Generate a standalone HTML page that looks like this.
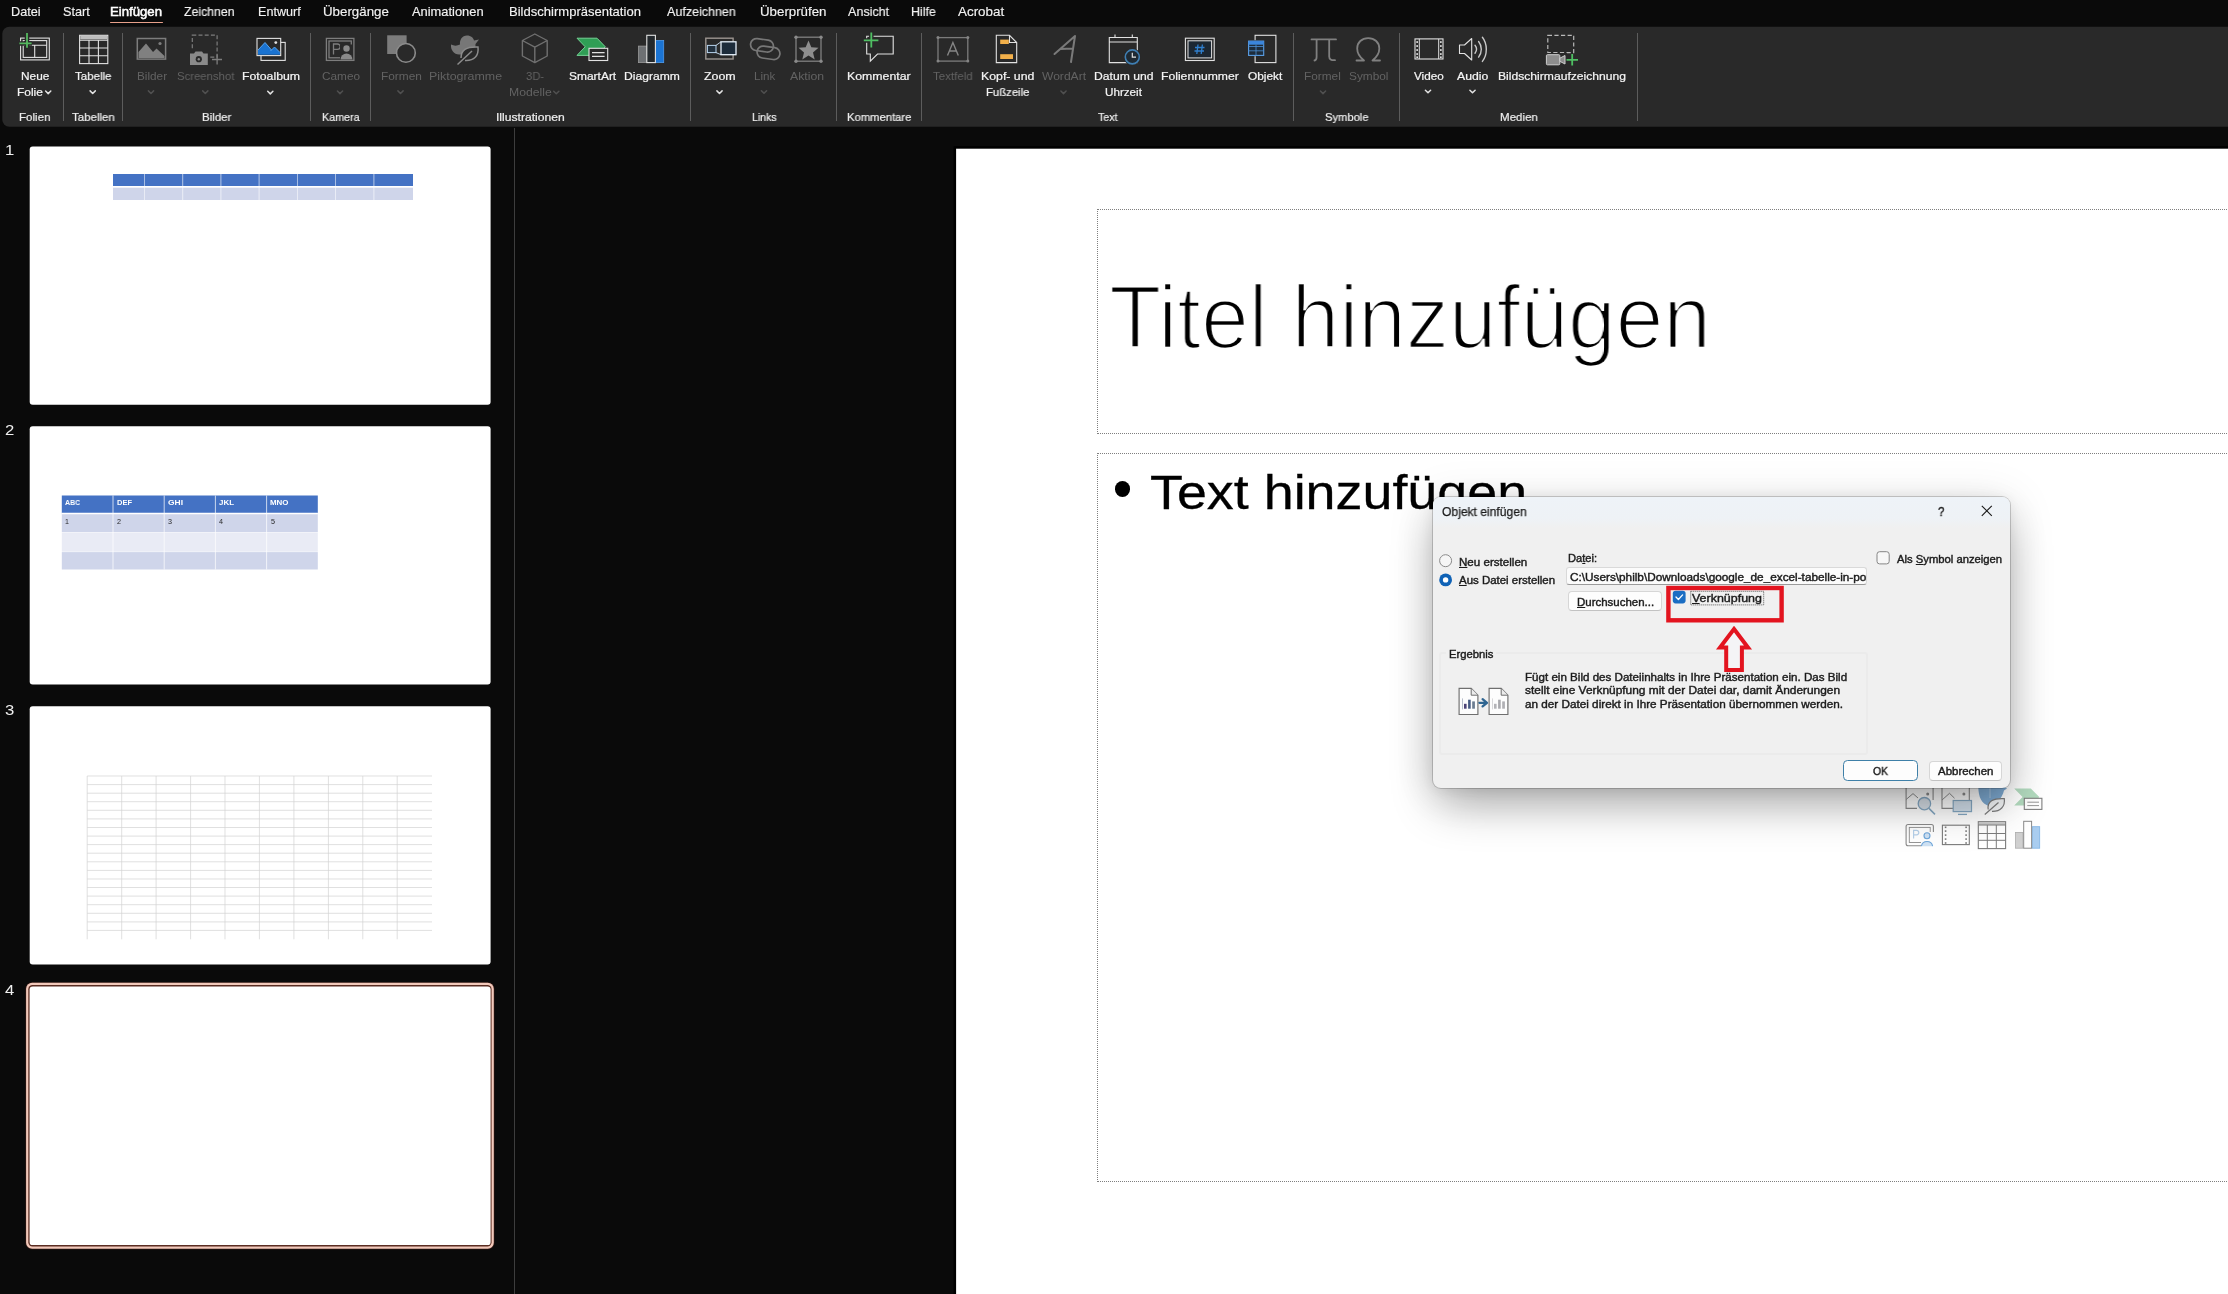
<!DOCTYPE html>
<html lang="de"><head><meta charset="utf-8"><title>PowerPoint – Objekt einfügen</title>
<style>

html,body{margin:0;padding:0;background:#0a0a0a;}
body{width:2228px;height:1294px;overflow:hidden;font-family:"Liberation Sans",sans-serif;}
#app{position:relative;width:2228px;height:1294px;overflow:hidden;background:#0a0a0a;}
.a{position:absolute;}
.t{position:absolute;white-space:pre;transform-origin:0 0;z-index:3;will-change:transform;}
.t u{text-decoration:underline;text-underline-offset:1px;text-decoration-thickness:1px;}
.sep{width:1px;top:33px;height:88px;background:#5c5c5c;}
.ph{border:1px dotted #7f7f7f;left:1096.5px;width:1200px;z-index:2;}
#dlg{left:1433px;top:497px;width:577px;height:291px;background:#f0f0f0;border-radius:8px;z-index:4;
 box-shadow:0 0 0 1px rgba(0,0,0,.18),0 2px 16px rgba(0,0,0,.08),0 6px 44px 8px rgba(0,0,0,.075),0 20px 48px -6px rgba(0,0,0,.33);overflow:hidden;}
#dlgtitle{left:0;top:0;width:577px;height:31px;background:linear-gradient(#eef3f8 0,#eef2f6 70%,#f0f0f0 100%);}
.btn{background:#fdfdfd;border:1px solid #d6d6d6;border-bottom-color:#c2c2c2;border-radius:4px;box-sizing:border-box;}
svg{position:absolute;left:0;top:0;overflow:visible;}

</style></head>
<body>
<div id="app">

<svg width="2228" height="1294"><rect x="2.3" y="26.7" width="2240" height="100" rx="7" fill="#292929"/></svg>
<div class="a" style="left:110px;top:21.6px;width:53px;height:1.6px;background:#e8a08a;border-radius:1px;"></div>
<div class="a sep" style="left:63.0px"></div><div class="a sep" style="left:121.7px"></div><div class="a sep" style="left:310.1px"></div><div class="a sep" style="left:369.5px"></div><div class="a sep" style="left:690.0px"></div><div class="a sep" style="left:836.3px"></div><div class="a sep" style="left:920.9px"></div><div class="a sep" style="left:1292.8px"></div><div class="a sep" style="left:1398.7px"></div><div class="a sep" style="left:1636.6px"></div>
<div class="a" style="left:514px;top:128px;width:1px;height:1170px;background:#3d3d3d;"></div>
<svg width="2228" height="1294"><rect x="29.7" y="146.4" width="460.9" height="258.3" rx="3" fill="#fff"/><rect x="113" y="174.0" width="300" height="12" fill="#4472c4"/><rect x="113" y="187.7" width="300" height="12.3" fill="#cfd5ea"/><path d="M144.4 174.0V200.0" stroke="#fff" stroke-width="0.8" opacity=".75"/><path d="M182.7 174.0V200.0" stroke="#fff" stroke-width="0.8" opacity=".75"/><path d="M220.9 174.0V200.0" stroke="#fff" stroke-width="0.8" opacity=".75"/><path d="M259.1 174.0V200.0" stroke="#fff" stroke-width="0.8" opacity=".75"/><path d="M297.4 174.0V200.0" stroke="#fff" stroke-width="0.8" opacity=".75"/><path d="M335.6 174.0V200.0" stroke="#fff" stroke-width="0.8" opacity=".75"/><path d="M373.9 174.0V200.0" stroke="#fff" stroke-width="0.8" opacity=".75"/><rect x="29.7" y="426.3" width="460.9" height="258.3" rx="3" fill="#fff"/><rect x="61.8" y="495.5" width="256" height="17.6" fill="#4472c4"/><rect x="61.8" y="513.5" width="256" height="18.6" fill="#cfd5ea"/><rect x="61.8" y="532.5" width="256" height="19.2" fill="#e9ebf5"/><rect x="61.8" y="552.1" width="256" height="17.4" fill="#cfd5ea"/><path d="M113.0 495.5V569.5" stroke="#fff" stroke-width="0.9" opacity=".8"/><path d="M164.2 495.5V569.5" stroke="#fff" stroke-width="0.9" opacity=".8"/><path d="M215.4 495.5V569.5" stroke="#fff" stroke-width="0.9" opacity=".8"/><path d="M266.6 495.5V569.5" stroke="#fff" stroke-width="0.9" opacity=".8"/><path d="M61.8 513.5H317.8" stroke="#fff" stroke-width="1.4"/><rect x="29.7" y="706.3" width="460.9" height="258.3" rx="3" fill="#fff"/><path d="M87.2 776.0V939.3M121.7 776.0V939.3M156.1 776.0V939.3M190.6 776.0V939.3M225.0 776.0V939.3M259.4 776.0V939.3M293.9 776.0V939.3M328.4 776.0V939.3M362.8 776.0V939.3M397.2 776.0V939.3M87.2 776.0H432M87.2 784.6H432M87.2 793.2H432M87.2 801.7H432M87.2 810.3H432M87.2 818.9H432M87.2 827.5H432M87.2 836.1H432M87.2 844.6H432M87.2 853.2H432M87.2 861.8H432M87.2 870.4H432M87.2 879.0H432M87.2 887.5H432M87.2 896.1H432M87.2 904.7H432M87.2 913.3H432M87.2 921.9H432M87.2 930.4H432" stroke="#d2d2d2" stroke-width="0.7" fill="none"/><rect x="25.3" y="982" width="469.3" height="267.5" rx="7" fill="#2a1410"/><rect x="26.1" y="982.8" width="467.7" height="265.9" rx="6" fill="#f3c9bb"/><rect x="28.3" y="985" width="463.3" height="261.5" rx="4.2" fill="#5a2d22"/><rect x="29.6" y="986.4" width="461" height="258.7" rx="3.2" fill="#fff"/></svg>
<svg width="2228" height="1294" style="z-index:1"><rect x="953.5" y="146.2" width="1290" height="1160" fill="#000"/><rect x="956.1" y="148.7" width="1280" height="1150" fill="#fff"/></svg>
<div class="a ph" style="top:208.6px;height:223.6px;"></div>
<div class="a ph" style="top:452.5px;height:727.8px;"></div>
<div class="a" style="left:1114.8px;top:481.3px;width:15.6px;height:15.6px;border-radius:50%;background:#000;z-index:3;"></div>
<svg width="2228" height="1294" style="z-index:3"><g fill="none" stroke="#e2e2e2" stroke-width="1.1"><rect x="20.6" y="38.1" width="28.7" height="21.8"/><rect x="23.2" y="40.6" width="23.5" height="16.8"/><path d="M23.2 45.2H46.7M34.7 45.2V57.4"/></g>
<path d="M27 32.5V48.2M19 43.4H32" stroke="#292929" stroke-width="4.5" fill="none"/><path d="M27 33V47.8M19.4 43.4H31.6" stroke="#55b85f" stroke-width="1.8" fill="none"/>
<g fill="none" stroke="#e2e2e2" stroke-width="1.1"><rect x="79.6" y="35.3" width="28.2" height="28.3"/><path d="M79.6 40.3H107.8M79.6 48H107.8M79.6 55.8H107.8M89 40.3V63.6M98.4 40.3V63.6"/></g><rect x="80.2" y="36" width="27" height="3.4" fill="#bdbdbd"/>
<rect x="137.3" y="38.5" width="28.3" height="20.6" fill="none" stroke="#7d7d7d" stroke-width="1.5"/><path d="M138.5 58V52L146 43.5L153 52L156.5 48.5L164.5 56V58Z" fill="#808080"/><circle cx="160" cy="43.5" r="1.6" fill="#7d7d7d"/>
<rect x="192.3" y="35.2" width="24.8" height="22" fill="none" stroke="#7d7d7d" stroke-width="1.2" stroke-dasharray="4 2.2"/>
<rect x="188" y="50" width="22" height="17" fill="#292929"/><path d="M190 53.5H194L195.5 51.5H202L203.5 53.5H207.8V65H190Z" fill="#8a8a8a"/><circle cx="198.8" cy="59.2" r="3.1" fill="#292929"/><circle cx="198.8" cy="59.2" r="1.2" fill="#8a8a8a"/>
<path d="M217.1 54.5V64.5M212 59.5H222" stroke="#7d7d7d" stroke-width="1.3"/>
<rect x="261" y="42.4" width="24.2" height="18" fill="none" stroke="#e2e2e2" stroke-width="1.1"/><rect x="257" y="38.4" width="23.7" height="17.2" fill="#292929" stroke="#e2e2e2" stroke-width="1.1"/>
<path d="M258 54.8V50L265 42.5L271.5 50L274.5 47L280 52.5V54.8Z" fill="#1a73d1"/><path d="M258 50L265 42.5L271.5 50M270.5 51L274.5 47L280 52.5" stroke="#5aa6f0" fill="none" stroke-width="1"/><circle cx="275.8" cy="42.6" r="1.4" fill="#e2e2e2"/>
<g fill="none" stroke="#7d7d7d" stroke-width="1.3"><rect x="326.4" y="38.4" width="27.5" height="22"/><rect x="329" y="41" width="22.3" height="16.8"/><path d="M333.5 54.5V44H337.5A2.6 2.6 0 0 1 337.5 49.3H333.5"/></g><rect x="340" y="44.5" width="12" height="15" fill="#292929"/><circle cx="346.5" cy="48.5" r="3.2" fill="#8a8a8a"/><path d="M340.5 59.5A6 6 0 0 1 352.5 59.5Z" fill="#8a8a8a"/>
<rect x="387.2" y="35.3" width="19.4" height="18.7" fill="#7c7c7c"/><circle cx="405.9" cy="52.9" r="9.4" fill="#292929" stroke="#8c8c8c" stroke-width="1.6"/>
<path d="M451 44.5C454 46 457 46 460 44.5C459.5 40 462 35.5 467 35.5C471 35.5 473.5 38 474 40.5L479 39.5L475.5 44C476 50 472 54.5 465 54.5H459C454 54.5 450.5 50 451 44.5Z" fill="#777"/>
<path d="M461 58C461 50 466 46.5 478 47C479 56 474 61 465 60.5" fill="#292929" stroke="#8c8c8c" stroke-width="1.5"/><path d="M457.5 64.5L472 51" stroke="#8c8c8c" stroke-width="1.5" fill="none"/>
<path d="M534.8 34L547.2 40.5V56L534.8 62.6L522.4 56V40.5ZM522.4 40.5L534.8 47.2L547.2 40.5M534.8 47.2V62.6" fill="none" stroke="#707070" stroke-width="1.4" stroke-linejoin="round"/>
<path d="M577 38.2H597L605.3 46.8L597 55.4H577L585.2 46.8Z" fill="#2f9e55" stroke="#74d194" stroke-width="1"/><rect x="589" y="48.3" width="18.7" height="12.2" fill="#292929" stroke="#e2e2e2" stroke-width="1.1"/><path d="M592 52.6H604.6M592 56.4H604.6" stroke="#e2e2e2" stroke-width="1.2"/>
<rect x="638.6" y="46.1" width="8.5" height="16.5" fill="#6d7073" stroke="#9a9a9a" stroke-width="0.8"/><rect x="655" y="40.4" width="8.7" height="22.2" fill="#1b74d3" stroke="#4f9bea" stroke-width="0.8"/><rect x="646.8" y="35.3" width="8.6" height="27.3" fill="#23282c" stroke="#e2e2e2" stroke-width="1.1"/>
<rect x="705.8" y="38.2" width="27.3" height="20.8" fill="none" stroke="#9b9490" stroke-width="1.4"/><rect x="707.4" y="45.4" width="8.6" height="7.2" fill="#22303d" stroke="#b8d4ee" stroke-width="1"/><path d="M716 45.4L721 41.8M716 52.6L721 54.7" stroke="#c9dff3" stroke-width="0.9"/><rect x="721" y="41.8" width="15" height="12.9" fill="#1d2c3b" stroke="#e6f0fa" stroke-width="1.3"/>
<g fill="none" stroke="#777" stroke-width="1.7"><rect x="750.5" y="39.3" width="23" height="12" rx="6" transform="rotate(8 762 45.3)"/><rect x="757" y="46.8" width="23" height="12" rx="6" transform="rotate(8 768.5 52.8)"/></g>
<rect x="796" y="37.2" width="25" height="24" fill="none" stroke="#808080" stroke-width="1.3"/><circle cx="796" cy="37.2" r="1.7" fill="#8a8a8a"/><circle cx="796" cy="61.2" r="1.7" fill="#8a8a8a"/><circle cx="821" cy="37.2" r="1.7" fill="#8a8a8a"/><circle cx="821" cy="61.2" r="1.7" fill="#8a8a8a"/>
<path d="M808.5 40.5L811.3 47.2L818.5 47.7L813 52.4L814.7 59.5L808.5 55.6L802.3 59.5L804 52.4L798.5 47.7L805.7 47.2Z" fill="#8e8e8e"/>
<path d="M866.7 36.3H893.2V54H877.5L870.3 61.2V54H866.7Z" fill="none" stroke="#e2e2e2" stroke-width="1.1" stroke-linejoin="miter"/><path d="M871.3 31.5V48.5M863 40.4H879" stroke="#292929" stroke-width="4.5" fill="none"/><path d="M871.3 32.5V47.5M863.8 40.4H878.4" stroke="#4fbf63" stroke-width="1.8" fill="none"/>
<rect x="938" y="37.6" width="29.8" height="23.5" fill="none" stroke="#7c7c7c" stroke-width="1.3"/><circle cx="938" cy="37.6" r="1.5" fill="#858585"/><circle cx="938" cy="61.1" r="1.5" fill="#858585"/><circle cx="967.8" cy="37.6" r="1.5" fill="#858585"/><circle cx="967.8" cy="61.1" r="1.5" fill="#858585"/>
<path d="M947.5 55.5L952.9 42.5L958.3 55.5M949.5 51H956.3" fill="none" stroke="#858585" stroke-width="1.4"/>
<path d="M996.3 35.3H1009.5L1016.7 42.5V62.6H996.3Z" fill="none" stroke="#e2e2e2" stroke-width="1.1"/><path d="M1009.5 35.3V42.5H1016.7" fill="none" stroke="#e2e2e2" stroke-width="1.1"/><rect x="1000.2" y="39.6" width="8.6" height="4.4" fill="#f2b04a"/><rect x="1000.2" y="54.2" width="12.8" height="4.8" fill="#f2b04a"/>
<path d="M1054.5 54L1075 36L1071 62M1060.5 49L1073 48.5" fill="none" stroke="#7a7a7a" stroke-width="2" stroke-linecap="round" stroke-linejoin="round"/>
<path d="M1109.3 37.5H1137.3V62.6H1109.3ZM1109.3 42H1137.3M1115 34.5V37.5M1132.3 34.5V37.5" fill="none" stroke="#e2e2e2" stroke-width="1.1"/><circle cx="1132.3" cy="56.9" r="8.6" fill="#292929"/><circle cx="1132.3" cy="56.9" r="7" fill="#1f2a33" stroke="#3f7fb3" stroke-width="1.6"/><path d="M1132.3 52.8V57.2H1136" fill="none" stroke="#e2e2e2" stroke-width="1.2"/>
<rect x="1185.4" y="38.2" width="28.8" height="22.3" fill="none" stroke="#e2e2e2" stroke-width="1.1"/><rect x="1188" y="40.8" width="23.6" height="17.1" fill="#1c2732" stroke="#e2e2e2" stroke-width="1"/><path d="M1198 44.5L1196.8 54M1202.4 44.5L1201.2 54M1195 47.5H1204.5M1194.5 51H1204" stroke="#2f7fce" stroke-width="1.3" fill="none"/>
<rect x="1255.1" y="35.3" width="20.8" height="27.3" fill="none" stroke="#e2e2e2" stroke-width="1.1"/><rect x="1248" y="40.2" width="16.4" height="16" fill="#292929"/><rect x="1248.6" y="41.1" width="15.1" height="14.3" fill="#1d2c3b" stroke="#5b9fe6" stroke-width="1.1"/><rect x="1248.6" y="41.1" width="15.1" height="3.6" fill="#3b86dc"/><path d="M1248.6 46.5H1263.7M1248.6 50.8H1263.7M1256 44.7V55.4" stroke="#4d8fd4" stroke-width="0.8"/>
<path d="M1311.5 39.4H1336M1316.6 39.4V57C1316.6 59.5 1315.8 60.3 1314.5 60.5M1329.2 39.4V56.5C1329.2 59.3 1331 60.4 1335 60.2" fill="none" stroke="#808080" stroke-width="1.8" stroke-linecap="round"/>
<path d="M1356.5 60.5H1364C1359.5 57 1357.2 52.8 1357.2 48.5C1357.2 42.3 1361.8 38.2 1368.2 38.2C1374.6 38.2 1379.3 42.3 1379.3 48.5C1379.3 52.8 1377 57 1372.5 60.5H1380" fill="none" stroke="#808080" stroke-width="1.8" stroke-linejoin="round" stroke-linecap="round"/>
<rect x="1415" y="38.9" width="28" height="20.1" fill="none" stroke="#e2e2e2" stroke-width="1.1"/><path d="M1419.3 38.9V59M1438.7 38.9V59" stroke="#e2e2e2" stroke-width="1"/><rect x="1416.3" y="41.2" width="1.7" height="1.7" fill="#e2e2e2"/><rect x="1416.3" y="45.2" width="1.7" height="1.7" fill="#e2e2e2"/><rect x="1416.3" y="49.2" width="1.7" height="1.7" fill="#e2e2e2"/><rect x="1416.3" y="53.2" width="1.7" height="1.7" fill="#e2e2e2"/><rect x="1416.3" y="56.4" width="1.7" height="1.7" fill="#e2e2e2"/><rect x="1440" y="41.2" width="1.7" height="1.7" fill="#e2e2e2"/><rect x="1440" y="45.2" width="1.7" height="1.7" fill="#e2e2e2"/><rect x="1440" y="49.2" width="1.7" height="1.7" fill="#e2e2e2"/><rect x="1440" y="53.2" width="1.7" height="1.7" fill="#e2e2e2"/><rect x="1440" y="56.4" width="1.7" height="1.7" fill="#e2e2e2"/>
<path d="M1459.5 45H1464.5L1471.7 38.5V60L1464.5 53.5H1459.5Z" fill="none" stroke="#e2e2e2" stroke-width="1.1" stroke-linejoin="round"/><path d="M1475 45.3C1476.8 47.6 1476.8 51 1475 53.3M1478.6 41.5C1482.2 46 1482.2 52.6 1478.6 57.1M1482.4 37.2C1487.6 43.8 1487.6 54.8 1482.4 61.4" fill="none" stroke="#c9c9c9" stroke-width="1.4" stroke-linecap="round"/>
<rect x="1547.8" y="35.3" width="25.9" height="17.3" fill="none" stroke="#b9b9b9" stroke-width="1.2" stroke-dasharray="4.2 2.4"/><rect x="1545" y="53" width="22" height="13" fill="#292929"/><rect x="1546.4" y="54.7" width="13.4" height="10.1" rx="1" fill="#8d8d8d" stroke="#cfcfcf" stroke-width="1"/><path d="M1559.8 58.2L1565 55.5V64L1559.8 61.3Z" fill="#8d8d8d" stroke="#cfcfcf" stroke-width="1"/><path d="M1572.2 54V65.5M1566.5 59.8H1578" stroke="#4fbf63" stroke-width="1.8"/>
<path d="M45.6 91.0 L48.2 93.6 L50.8 91.0" fill="none" stroke="#e2e2e2" stroke-width="1.5" stroke-linecap="round" stroke-linejoin="round"/>
<path d="M90.1 90.9 L92.7 93.5 L95.3 90.9" fill="none" stroke="#e2e2e2" stroke-width="1.5" stroke-linecap="round" stroke-linejoin="round"/>
<path d="M148.4 90.9 L151.0 93.5 L153.6 90.9" fill="none" stroke="#505050" stroke-width="1.5" stroke-linecap="round" stroke-linejoin="round"/>
<path d="M202.7 90.9 L205.3 93.5 L207.9 90.9" fill="none" stroke="#505050" stroke-width="1.5" stroke-linecap="round" stroke-linejoin="round"/>
<path d="M267.7 91.3 L270.3 93.9 L272.9 91.3" fill="none" stroke="#e2e2e2" stroke-width="1.5" stroke-linecap="round" stroke-linejoin="round"/>
<path d="M337.4 91.0 L340.0 93.6 L342.6 91.0" fill="none" stroke="#505050" stroke-width="1.5" stroke-linecap="round" stroke-linejoin="round"/>
<path d="M397.9 90.9 L400.5 93.5 L403.1 90.9" fill="none" stroke="#505050" stroke-width="1.5" stroke-linecap="round" stroke-linejoin="round"/>
<path d="M553.7 91.2 L556.3 93.8 L558.9 91.2" fill="none" stroke="#505050" stroke-width="1.5" stroke-linecap="round" stroke-linejoin="round"/>
<path d="M716.9 90.9 L719.5 93.5 L722.1 90.9" fill="none" stroke="#e2e2e2" stroke-width="1.5" stroke-linecap="round" stroke-linejoin="round"/>
<path d="M761.4 90.7 L764.0 93.3 L766.6 90.7" fill="none" stroke="#505050" stroke-width="1.5" stroke-linecap="round" stroke-linejoin="round"/>
<path d="M1060.9 91.0 L1063.5 93.6 L1066.1 91.0" fill="none" stroke="#505050" stroke-width="1.5" stroke-linecap="round" stroke-linejoin="round"/>
<path d="M1320.4 91.0 L1323.0 93.6 L1325.6 91.0" fill="none" stroke="#505050" stroke-width="1.5" stroke-linecap="round" stroke-linejoin="round"/>
<path d="M1425.4 90.2 L1428.0 92.8 L1430.6 90.2" fill="none" stroke="#e2e2e2" stroke-width="1.5" stroke-linecap="round" stroke-linejoin="round"/>
<path d="M1469.9 90.2 L1472.5 92.8 L1475.1 90.2" fill="none" stroke="#e2e2e2" stroke-width="1.5" stroke-linecap="round" stroke-linejoin="round"/><path d="M1933.1 800V786H1906.1V808.4H1917" fill="none" stroke="#8c8c8c" stroke-width="1.1"/><path d="M1906.1 799.5L1913 793.6L1918 798" fill="none" stroke="#8c8c8c" stroke-width="1"/><circle cx="1927.7" cy="794" r="1.5" fill="#8c8c8c"/><circle cx="1924.4" cy="803.7" r="6.2" fill="#d7dfe7" stroke="#86a9c4" stroke-width="1.3"/><path d="M1929 808.4L1935 814.4" stroke="#86a9c4" stroke-width="1.5"/><path d="M1969.3 800V786H1942V808.4H1953" fill="none" stroke="#8c8c8c" stroke-width="1.1"/><path d="M1942 800L1949.5 793.3L1954.5 798.2" fill="none" stroke="#8c8c8c" stroke-width="1"/><circle cx="1963.9" cy="794" r="1.5" fill="#8c8c8c"/><rect x="1953.2" y="800.5" width="18.3" height="11.1" fill="#d3e0ec" stroke="#86a9c4" stroke-width="1.2"/><path d="M1958 814.4H1967" stroke="#86a9c4" stroke-width="1.3"/><path d="M1978.3 786C1978.3 798 1982 803.5 1988.5 805.9C1996 805 2002 799 2004 790.5L2007 788.5L2003 786Z" fill="#7eaad2"/><path d="M1990 786V798" stroke="#a9c6e0" stroke-width="1"/><path d="M1988.2 809.5C1987 801.5 1993 798 2004.3 798.6C2005.4 806.5 2000.5 811.6 1992 811.4" fill="#f4f6f8" stroke="#7d7d7d" stroke-width="1.2"/><path d="M1984.8 814.5L1998.5 802.5" stroke="#7d7d7d" stroke-width="1.2"/><path d="M2014.2 788.6H2030.8L2039.3 797.1L2030.8 805.5H2014.2L2022.6 797.1Z" fill="#b3dbbf"/><rect x="2024.3" y="798.3" width="17.6" height="11.1" fill="#fff" stroke="#7e7e7e" stroke-width="1.1"/><path d="M2027.3 802.2H2039M2027.3 805.6H2039" stroke="#8a8a8a" stroke-width="0.9"/><rect x="1906.1" y="824.5" width="27.3" height="21.2" rx="2" fill="none" stroke="#8c8c8c" stroke-width="1.1"/><rect x="1909.3" y="827.4" width="20.9" height="15.1" fill="none" stroke="#8c8c8c" stroke-width="0.9"/><path d="M1913.6 838.6V830.4H1916.6A2.2 2.2 0 0 1 1916.6 834.8H1913.6" fill="none" stroke="#b5d0ea" stroke-width="1.2"/><rect x="1921" y="832" width="13.5" height="15" fill="#fff"/><circle cx="1927" cy="835.7" r="3" fill="#cfe2f4" stroke="#6ea6da" stroke-width="1.1"/><path d="M1921.4 846.2A5.7 5.7 0 0 1 1932.6 846.2" fill="#cfe2f4" stroke="#6ea6da" stroke-width="1.1"/><rect x="1942.4" y="825.2" width="26.9" height="19.4" fill="none" stroke="#7b7b7b" stroke-width="1.1"/><rect x="1944.8" y="826.5" width="1.6" height="1.6" fill="#7b7b7b"/><rect x="1944.8" y="830.3" width="1.6" height="1.6" fill="#7b7b7b"/><rect x="1944.8" y="834.3" width="1.6" height="1.6" fill="#7b7b7b"/><rect x="1944.8" y="838.3" width="1.6" height="1.6" fill="#7b7b7b"/><rect x="1944.8" y="842.2" width="1.6" height="1.6" fill="#7b7b7b"/><rect x="1965.3" y="826.5" width="1.6" height="1.6" fill="#7b7b7b"/><rect x="1965.3" y="830.3" width="1.6" height="1.6" fill="#7b7b7b"/><rect x="1965.3" y="834.3" width="1.6" height="1.6" fill="#7b7b7b"/><rect x="1965.3" y="838.3" width="1.6" height="1.6" fill="#7b7b7b"/><rect x="1965.3" y="842.2" width="1.6" height="1.6" fill="#7b7b7b"/><rect x="1978.3" y="821.7" width="27.3" height="26.9" fill="none" stroke="#7c7c7c" stroke-width="1.1"/><rect x="1978.8" y="822.2" width="26.3" height="2.6" fill="#c9c9c9"/><path d="M1978.3 825H2005.6M1978.3 833.5H2005.6M1978.3 840.3H2005.6M1987.3 825V848.6M1996.3 825V848.6" stroke="#7c7c7c" stroke-width="1"/><rect x="2015.6" y="832.4" width="7.4" height="15.8" fill="#d0d0d0" stroke="#adadad" stroke-width="0.8"/><rect x="2032.3" y="826.7" width="7.4" height="21.5" fill="#a9cdf0" stroke="#7fb2e4" stroke-width="0.8"/><rect x="2023.7" y="821.3" width="7.9" height="26.9" fill="#fff" stroke="#8a8a8a" stroke-width="1"/></svg>
<div class="a" id="dlg"><div class="a" id="dlgtitle"></div><div class="a" style="left:133.3px;top:70.0px;width:301.2px;height:18.4px;background:#fbfbfb;border:1px solid #d9d9d9;border-bottom-color:#9a9a9a;border-radius:3px;box-sizing:border-box;"></div><div class="a btn" style="left:135.0px;top:93.8px;width:93.7px;height:20.2px;"></div><div class="a" style="left:6.2px;top:155.2px;width:428.8px;height:102.8px;border:2px solid #ebebeb;border-radius:3px;box-sizing:border-box;"></div><div class="a" style="left:13.0px;top:151.0px;width:50px;height:12px;background:#f0f0f0;"></div><div class="a" style="left:410.3px;top:263.3px;width:74.7px;height:20.6px;background:#fdfdfd;border:1.6px solid #3f80a8;border-radius:4.5px;box-sizing:border-box;"></div><div class="a btn" style="left:496.0px;top:264.0px;width:73px;height:19.6px;"></div></div>

<span id="t0" class="t" style="left:10.5px;top:5.7px;font-size:12.6px;line-height:12.6px;color:#f2f2f2;transform:scaleX(1.0066);-webkit-text-stroke:0.15px #f2f2f2;">Datei</span>
<span id="t1" class="t" style="left:62.5px;top:5.7px;font-size:12.6px;line-height:12.6px;color:#f2f2f2;transform:scaleX(1.0109);-webkit-text-stroke:0.15px #f2f2f2;">Start</span>
<span id="t2" class="t" style="left:110.2px;top:5.7px;font-size:12.6px;line-height:12.6px;color:#fff;transform:scaleX(1.0459);-webkit-text-stroke:0.5px #fff;">Einfügen</span>
<span id="t3" class="t" style="left:183.9px;top:5.7px;font-size:12.6px;line-height:12.6px;color:#f2f2f2;transform:scaleX(0.9766);-webkit-text-stroke:0.15px #f2f2f2;">Zeichnen</span>
<span id="t4" class="t" style="left:258.3px;top:5.7px;font-size:12.6px;line-height:12.6px;color:#f2f2f2;-webkit-text-stroke:0.15px #f2f2f2;">Entwurf</span>
<span id="t5" class="t" style="left:322.7px;top:5.7px;font-size:12.6px;line-height:12.6px;color:#f2f2f2;transform:scaleX(1.0573);-webkit-text-stroke:0.15px #f2f2f2;">Übergänge</span>
<span id="t6" class="t" style="left:411.9px;top:5.7px;font-size:12.6px;line-height:12.6px;color:#f2f2f2;transform:scaleX(1.0226);-webkit-text-stroke:0.15px #f2f2f2;">Animationen</span>
<span id="t7" class="t" style="left:509.3px;top:5.7px;font-size:12.6px;line-height:12.6px;color:#f2f2f2;transform:scaleX(1.0353);-webkit-text-stroke:0.15px #f2f2f2;">Bildschirmpräsentation</span>
<span id="t8" class="t" style="left:666.9px;top:5.7px;font-size:12.6px;line-height:12.6px;color:#f2f2f2;transform:scaleX(0.9924);-webkit-text-stroke:0.15px #f2f2f2;">Aufzeichnen</span>
<span id="t9" class="t" style="left:759.5px;top:5.7px;font-size:12.6px;line-height:12.6px;color:#f2f2f2;transform:scaleX(1.0553);-webkit-text-stroke:0.15px #f2f2f2;">Überprüfen</span>
<span id="t10" class="t" style="left:848.2px;top:5.7px;font-size:12.6px;line-height:12.6px;color:#f2f2f2;transform:scaleX(0.9949);-webkit-text-stroke:0.15px #f2f2f2;">Ansicht</span>
<span id="t11" class="t" style="left:911.2px;top:5.7px;font-size:12.6px;line-height:12.6px;color:#f2f2f2;transform:scaleX(0.9840);-webkit-text-stroke:0.15px #f2f2f2;">Hilfe</span>
<span id="t12" class="t" style="left:957.9px;top:5.7px;font-size:12.6px;line-height:12.6px;color:#f2f2f2;transform:scaleX(1.0644);-webkit-text-stroke:0.15px #f2f2f2;">Acrobat</span>
<span id="t13" class="t" style="left:21.2px;top:70.2px;font-size:11.6px;line-height:11.6px;color:#f4f4f4;transform:scaleX(1.0210);-webkit-text-stroke:0.22px #f4f4f4;">Neue</span>
<span id="t14" class="t" style="left:17.3px;top:85.8px;font-size:11.6px;line-height:11.6px;color:#f4f4f4;transform:scaleX(1.0302);-webkit-text-stroke:0.22px #f4f4f4;">Folie</span>
<span id="t15" class="t" style="left:75.4px;top:70.2px;font-size:11.6px;line-height:11.6px;color:#f4f4f4;transform:scaleX(0.9905);-webkit-text-stroke:0.22px #f4f4f4;">Tabelle</span>
<span id="t16" class="t" style="left:136.7px;top:70.2px;font-size:11.6px;line-height:11.6px;color:#626262;transform:scaleX(1.0150);">Bilder</span>
<span id="t17" class="t" style="left:176.7px;top:70.2px;font-size:11.6px;line-height:11.6px;color:#626262;transform:scaleX(0.9769);">Screenshot</span>
<span id="t18" class="t" style="left:241.9px;top:70.2px;font-size:11.6px;line-height:11.6px;color:#f4f4f4;transform:scaleX(1.0606);-webkit-text-stroke:0.22px #f4f4f4;">Fotoalbum</span>
<span id="t19" class="t" style="left:321.5px;top:70.2px;font-size:11.6px;line-height:11.6px;color:#626262;transform:scaleX(1.0167);">Cameo</span>
<span id="t20" class="t" style="left:380.6px;top:70.2px;font-size:11.6px;line-height:11.6px;color:#626262;transform:scaleX(1.0237);">Formen</span>
<span id="t21" class="t" style="left:428.5px;top:70.2px;font-size:11.6px;line-height:11.6px;color:#626262;transform:scaleX(1.0703);">Piktogramme</span>
<span id="t22" class="t" style="left:525.9px;top:70.2px;font-size:11.6px;line-height:11.6px;color:#626262;transform:scaleX(0.9686);">3D-</span>
<span id="t23" class="t" style="left:508.7px;top:85.8px;font-size:11.6px;line-height:11.6px;color:#626262;transform:scaleX(1.0539);">Modelle</span>
<span id="t24" class="t" style="left:569.1px;top:70.2px;font-size:11.6px;line-height:11.6px;color:#f4f4f4;transform:scaleX(1.0317);-webkit-text-stroke:0.22px #f4f4f4;">SmartArt</span>
<span id="t25" class="t" style="left:623.6px;top:70.2px;font-size:11.6px;line-height:11.6px;color:#f4f4f4;transform:scaleX(1.0436);-webkit-text-stroke:0.22px #f4f4f4;">Diagramm</span>
<span id="t26" class="t" style="left:703.6px;top:70.2px;font-size:11.6px;line-height:11.6px;color:#f4f4f4;transform:scaleX(1.0695);-webkit-text-stroke:0.22px #f4f4f4;">Zoom</span>
<span id="t27" class="t" style="left:753.5px;top:70.2px;font-size:11.6px;line-height:11.6px;color:#626262;transform:scaleX(0.9962);">Link</span>
<span id="t28" class="t" style="left:790.4px;top:70.2px;font-size:11.6px;line-height:11.6px;color:#626262;transform:scaleX(1.0579);">Aktion</span>
<span id="t29" class="t" style="left:847.3px;top:70.2px;font-size:11.6px;line-height:11.6px;color:#f4f4f4;transform:scaleX(1.0614);-webkit-text-stroke:0.22px #f4f4f4;">Kommentar</span>
<span id="t30" class="t" style="left:933.2px;top:70.2px;font-size:11.6px;line-height:11.6px;color:#626262;transform:scaleX(0.9908);">Textfeld</span>
<span id="t31" class="t" style="left:980.5px;top:70.2px;font-size:11.6px;line-height:11.6px;color:#f4f4f4;transform:scaleX(1.0620);-webkit-text-stroke:0.22px #f4f4f4;">Kopf- und</span>
<span id="t32" class="t" style="left:986.0px;top:85.8px;font-size:11.6px;line-height:11.6px;color:#f4f4f4;transform:scaleX(0.9782);-webkit-text-stroke:0.22px #f4f4f4;">Fußzeile</span>
<span id="t33" class="t" style="left:1041.7px;top:70.2px;font-size:11.6px;line-height:11.6px;color:#626262;transform:scaleX(1.0399);">WordArt</span>
<span id="t34" class="t" style="left:1093.6px;top:70.2px;font-size:11.6px;line-height:11.6px;color:#f4f4f4;transform:scaleX(1.0473);-webkit-text-stroke:0.22px #f4f4f4;">Datum und</span>
<span id="t35" class="t" style="left:1105.4px;top:85.8px;font-size:11.6px;line-height:11.6px;color:#f4f4f4;transform:scaleX(1.0045);-webkit-text-stroke:0.22px #f4f4f4;">Uhrzeit</span>
<span id="t36" class="t" style="left:1161.1px;top:70.2px;font-size:11.6px;line-height:11.6px;color:#f4f4f4;transform:scaleX(1.0498);-webkit-text-stroke:0.22px #f4f4f4;">Foliennummer</span>
<span id="t37" class="t" style="left:1247.7px;top:70.2px;font-size:11.6px;line-height:11.6px;color:#f4f4f4;transform:scaleX(1.0234);-webkit-text-stroke:0.22px #f4f4f4;">Objekt</span>
<span id="t38" class="t" style="left:1304.4px;top:70.2px;font-size:11.6px;line-height:11.6px;color:#626262;transform:scaleX(1.0200);">Formel</span>
<span id="t39" class="t" style="left:1348.7px;top:70.2px;font-size:11.6px;line-height:11.6px;color:#626262;transform:scaleX(1.0214);">Symbol</span>
<span id="t40" class="t" style="left:1413.9px;top:70.2px;font-size:11.6px;line-height:11.6px;color:#f4f4f4;transform:scaleX(1.0084);-webkit-text-stroke:0.22px #f4f4f4;">Video</span>
<span id="t41" class="t" style="left:1457.3px;top:70.2px;font-size:11.6px;line-height:11.6px;color:#f4f4f4;transform:scaleX(1.0554);-webkit-text-stroke:0.22px #f4f4f4;">Audio</span>
<span id="t42" class="t" style="left:1498.3px;top:70.2px;font-size:11.6px;line-height:11.6px;color:#f4f4f4;transform:scaleX(1.0461);-webkit-text-stroke:0.22px #f4f4f4;">Bildschirmaufzeichnung</span>
<span id="t43" class="t" style="left:19.2px;top:110.5px;font-size:11.6px;line-height:11.6px;color:#ededed;transform:scaleX(0.9944);-webkit-text-stroke:0.22px #ededed;">Folien</span>
<span id="t44" class="t" style="left:71.5px;top:110.5px;font-size:11.6px;line-height:11.6px;color:#ededed;transform:scaleX(0.9887);-webkit-text-stroke:0.22px #ededed;">Tabellen</span>
<span id="t45" class="t" style="left:201.9px;top:110.5px;font-size:11.6px;line-height:11.6px;color:#ededed;transform:scaleX(0.9880);-webkit-text-stroke:0.22px #ededed;">Bilder</span>
<span id="t46" class="t" style="left:322.2px;top:110.5px;font-size:11.6px;line-height:11.6px;color:#ededed;transform:scaleX(0.9259);-webkit-text-stroke:0.22px #ededed;">Kamera</span>
<span id="t47" class="t" style="left:496.1px;top:110.5px;font-size:11.6px;line-height:11.6px;color:#ededed;transform:scaleX(1.0464);-webkit-text-stroke:0.22px #ededed;">Illustrationen</span>
<span id="t48" class="t" style="left:751.5px;top:110.5px;font-size:11.6px;line-height:11.6px;color:#ededed;transform:scaleX(0.9085);-webkit-text-stroke:0.22px #ededed;">Links</span>
<span id="t49" class="t" style="left:847.3px;top:110.5px;font-size:11.6px;line-height:11.6px;color:#ededed;transform:scaleX(0.9702);-webkit-text-stroke:0.22px #ededed;">Kommentare</span>
<span id="t50" class="t" style="left:1097.5px;top:110.5px;font-size:11.6px;line-height:11.6px;color:#ededed;transform:scaleX(0.9217);-webkit-text-stroke:0.22px #ededed;">Text</span>
<span id="t51" class="t" style="left:1325.0px;top:110.5px;font-size:11.6px;line-height:11.6px;color:#ededed;transform:scaleX(0.9643);-webkit-text-stroke:0.22px #ededed;">Symbole</span>
<span id="t52" class="t" style="left:1499.7px;top:110.5px;font-size:11.6px;line-height:11.6px;color:#ededed;transform:scaleX(0.9939);-webkit-text-stroke:0.22px #ededed;">Medien</span>
<span id="t53" class="t" style="left:4.9px;top:143.9px;font-size:13.8px;line-height:13.8px;color:#f0f0f0;transform:scaleX(1.2098);">1</span>
<span id="t54" class="t" style="left:4.9px;top:423.9px;font-size:13.8px;line-height:13.8px;color:#f0f0f0;transform:scaleX(1.2098);">2</span>
<span id="t55" class="t" style="left:4.9px;top:703.9px;font-size:13.8px;line-height:13.8px;color:#f0f0f0;transform:scaleX(1.2098);">3</span>
<span id="t56" class="t" style="left:4.9px;top:983.9px;font-size:13.8px;line-height:13.8px;color:#f0f0f0;transform:scaleX(1.2098);">4</span>
<span id="t57" class="t" style="left:65.2px;top:499.1px;font-size:7.2px;line-height:7.2px;color:#fff;font-weight:700;transform:scaleX(0.9629);">ABC</span>
<span id="t58" class="t" style="left:116.5px;top:499.1px;font-size:7.2px;line-height:7.2px;color:#fff;font-weight:700;transform:scaleX(1.0435);">DEF</span>
<span id="t59" class="t" style="left:167.8px;top:499.1px;font-size:7.2px;line-height:7.2px;color:#fff;font-weight:700;transform:scaleX(1.1736);">GHI</span>
<span id="t60" class="t" style="left:219.1px;top:499.1px;font-size:7.2px;line-height:7.2px;color:#fff;font-weight:700;transform:scaleX(1.1034);">JKL</span>
<span id="t61" class="t" style="left:270.4px;top:499.1px;font-size:7.2px;line-height:7.2px;color:#fff;font-weight:700;transform:scaleX(1.1024);">MNO</span>
<span id="t62" class="t" style="left:65.4px;top:518.1px;font-size:7.2px;line-height:7.2px;color:#222;transform:scaleX(0.9500);">1</span>
<span id="t63" class="t" style="left:116.7px;top:518.1px;font-size:7.2px;line-height:7.2px;color:#222;transform:scaleX(0.9500);">2</span>
<span id="t64" class="t" style="left:168.0px;top:518.1px;font-size:7.2px;line-height:7.2px;color:#222;transform:scaleX(0.9500);">3</span>
<span id="t65" class="t" style="left:219.3px;top:518.1px;font-size:7.2px;line-height:7.2px;color:#222;transform:scaleX(0.9500);">4</span>
<span id="t66" class="t" style="left:270.6px;top:518.1px;font-size:7.2px;line-height:7.2px;color:#222;transform:scaleX(0.9500);">5</span>
<span id="t67" class="t" style="left:1109.0px;top:273.5px;font-size:88.4px;line-height:88.4px;color:#000;transform:scaleX(0.9698);-webkit-text-stroke:2.7px #fff;">Titel hinzufügen</span>
<span id="t68" class="t" style="left:1149.7px;top:467.8px;font-size:48.7px;line-height:48.7px;color:#000;transform:scaleX(1.1057);-webkit-text-stroke:0.3px #000;">Text hinzufügen</span>
<span id="t69" class="t" style="left:1442.0px;top:506.0px;font-size:12.3px;line-height:12.3px;color:#1a1a1a;transform:scaleX(0.9833);z-index:6;-webkit-text-stroke:0.25px #1a1a1a;">Objekt einfügen</span>
<span id="t70" class="t" style="left:1938.4px;top:504.7px;font-size:13.4px;line-height:13.4px;color:#1a1a1a;transform:scaleX(0.8721);z-index:6;-webkit-text-stroke:0.4px #1b1b1b;">?</span>
<span id="t71" class="t" style="left:1458.8px;top:556.5px;font-size:10.7px;line-height:10.7px;color:#1b1b1b;transform:scaleX(1.0844);z-index:6;-webkit-text-stroke:0.4px #1b1b1b;"><u>N</u>eu erstellen</span>
<span id="t72" class="t" style="left:1458.8px;top:575.2px;font-size:10.7px;line-height:10.7px;color:#1b1b1b;transform:scaleX(1.0711);z-index:6;-webkit-text-stroke:0.4px #1b1b1b;"><u>A</u>us Datei erstellen</span>
<span id="t73" class="t" style="left:1567.7px;top:552.5px;font-size:10.7px;line-height:10.7px;color:#1b1b1b;transform:scaleX(1.0410);z-index:6;-webkit-text-stroke:0.4px #1b1b1b;">Da<u>t</u>ei:</span>
<span id="t74" class="t" style="left:1569.7px;top:571.5px;font-size:10.7px;line-height:10.7px;color:#1b1b1b;transform:scaleX(1.1013);z-index:6;-webkit-text-stroke:0.4px #1b1b1b;">C:\Users\philb\Downloads\google_de_excel-tabelle-in-po</span>
<span id="t75" class="t" style="left:1576.5px;top:596.9px;font-size:10.7px;line-height:10.7px;color:#1b1b1b;transform:scaleX(1.0725);z-index:6;-webkit-text-stroke:0.4px #1b1b1b;"><u>D</u>urchsuchen...</span>
<span id="t76" class="t" style="left:1692.1px;top:592.8px;font-size:10.7px;line-height:10.7px;color:#1b1b1b;transform:scaleX(1.1644);z-index:6;-webkit-text-stroke:0.4px #1b1b1b;"><u>V</u>erknüpfung</span>
<span id="t77" class="t" style="left:1896.7px;top:553.9px;font-size:10.7px;line-height:10.7px;color:#1b1b1b;transform:scaleX(1.0526);z-index:6;-webkit-text-stroke:0.4px #1b1b1b;">Als <u>S</u>ymbol anzeigen</span>
<span id="t78" class="t" style="left:1448.7px;top:649.1px;font-size:10.7px;line-height:10.7px;color:#1b1b1b;transform:scaleX(1.0548);z-index:6;-webkit-text-stroke:0.4px #1b1b1b;">Ergebnis</span>
<span id="t79" class="t" style="left:1525.2px;top:672.0px;font-size:10.7px;line-height:10.7px;color:#1b1b1b;transform:scaleX(1.0843);z-index:6;-webkit-text-stroke:0.4px #1b1b1b;">Fügt ein Bild des Dateiinhalts in Ihre Präsentation ein. Das Bild</span>
<span id="t80" class="t" style="left:1525.2px;top:685.2px;font-size:10.7px;line-height:10.7px;color:#1b1b1b;transform:scaleX(1.1142);z-index:6;-webkit-text-stroke:0.4px #1b1b1b;">stellt eine Verknüpfung mit der Datei dar, damit Änderungen</span>
<span id="t81" class="t" style="left:1525.2px;top:698.5px;font-size:10.7px;line-height:10.7px;color:#1b1b1b;transform:scaleX(1.0968);z-index:6;-webkit-text-stroke:0.4px #1b1b1b;">an der Datei direkt in Ihre Präsentation übernommen werden.</span>
<span id="t82" class="t" style="left:1873.0px;top:766.1px;font-size:10.7px;line-height:10.7px;color:#1b1b1b;transform:scaleX(0.9707);z-index:6;-webkit-text-stroke:0.4px #1b1b1b;">OK</span>
<span id="t83" class="t" style="left:1938.3px;top:766.1px;font-size:10.7px;line-height:10.7px;color:#1b1b1b;transform:scaleX(1.0715);z-index:6;-webkit-text-stroke:0.4px #1b1b1b;">Abbrechen</span>

<svg width="2228" height="1294" style="z-index:7"><path d="M1981.8 505.8L1991.8 515.8M1991.8 505.8L1981.8 515.8" stroke="#1a1a1a" stroke-width="1.1" fill="none"/><circle cx="1445.6" cy="560.7" r="6" fill="#f6f6f6" stroke="#8a8a8a" stroke-width="1"/><circle cx="1445.6" cy="579.9" r="6.4" fill="#0f62b6"/><circle cx="1445.6" cy="579.9" r="2.7" fill="#fff"/><rect x="1877" y="551.7" width="12.2" height="12.2" rx="2.6" fill="#f7f7f7" stroke="#858585" stroke-width="1"/><rect x="1672.8" y="590.8" width="12.8" height="12.6" rx="2.8" fill="#1a6dc3"/><path d="M1676 597L1678.4 599.5L1682.6 594.9" fill="none" stroke="#fff" stroke-width="1.3" stroke-linecap="round" stroke-linejoin="round"/><rect x="1690.7" y="591.3" width="73" height="13.6" fill="none" stroke="#444" stroke-width="0.9" stroke-dasharray="1 1"/><path d="M1459.1 688.4H1471.1999999999998L1477.8999999999999 695.1999999999999V714.5H1459.1Z" fill="#fdfdfd" stroke="#6f6f6f" stroke-width="1.15"/><path d="M1471.1999999999998 688.4V695.1999999999999H1477.8999999999999" fill="#ececec" stroke="#6f6f6f" stroke-width="1"/><path d="M1462.5 698.4V709.4" fill="none" stroke="#9aa3b5" stroke-width="0.7"/><rect x="1464.0" y="703.8" width="2.6" height="4.9" fill="#4d4478"/><rect x="1468.1" y="699.7" width="2.6" height="9" fill="#465a82"/><rect x="1472.2" y="701.4" width="2.7" height="7.3" fill="#6b7c90"/><path d="M1489.1 688.4H1501.1999999999998L1507.8999999999999 695.1999999999999V714.5H1489.1Z" fill="#fdfdfd" stroke="#6f6f6f" stroke-width="1.15"/><path d="M1501.1999999999998 688.4V695.1999999999999H1507.8999999999999" fill="#ececec" stroke="#6f6f6f" stroke-width="1"/><path d="M1492.5 698.4V709.4" fill="none" stroke="#c8c8cc" stroke-width="0.7"/><rect x="1494.0" y="703.8" width="2.6" height="4.9" fill="#b4b4b8"/><rect x="1498.1" y="699.7" width="2.6" height="9" fill="#a9a9ad"/><rect x="1502.2" y="701.4" width="2.7" height="7.3" fill="#b0b0b4"/><path d="M1479.4 702.8H1486M1482.6 699.2L1487 702.8L1482.6 706.4" fill="none" stroke="#2f6591" stroke-width="2.3" stroke-linejoin="round" stroke-linecap="round"/><rect x="1668.4" y="588" width="113.2" height="32.3" fill="none" stroke="#e3141f" stroke-width="4.4"/><path d="M1734 629L1748 647.5H1741.9V670H1726.2V647.5H1720Z" fill="#f4f4f6" stroke="#e3141f" stroke-width="4" stroke-linejoin="miter"/></svg>

</div>
</body></html>
